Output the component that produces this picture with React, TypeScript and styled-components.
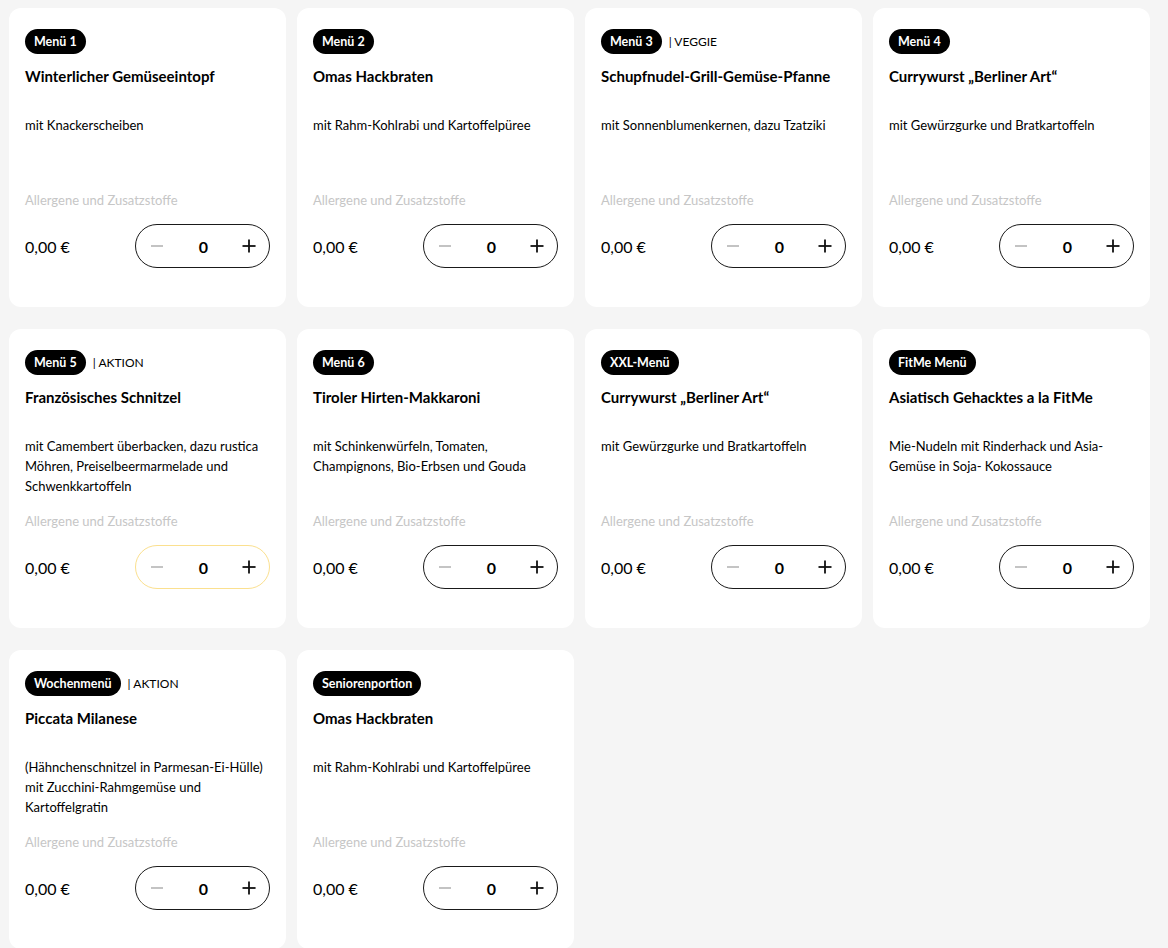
import React from "react";
import styled, { createGlobalStyle } from "styled-components";

const Global = createGlobalStyle`
  html, body { margin: 0; padding: 0; background: #f5f5f5; }
  body { font-family: "Source Sans Pro", Lato, "Liberation Sans", sans-serif; color: #000; }
`;

const Grid = styled.div`
  display: grid;
  grid-template-columns: repeat(4, 277px);
  column-gap: 11px;
  row-gap: 22px;
  padding: 8px 0 0 9px;
`;

const Card = styled.div`
  background: #fff;
  border-radius: 12px;
  height: 299px;
  box-sizing: border-box;
  padding: 21px 16px 0 16px;
  display: flex;
  flex-direction: column;
`;

const Header = styled.div`
  display: flex;
  align-items: center;
  gap: 7px;
  height: 25px;
`;

const Badge = styled.span`
  display: inline-flex;
  align-items: center;
  height: 25px;
  padding: 0 9px;
  border-radius: 13px;
  background: #000;
  color: #fff;
  font-size: 12.5px;
  font-weight: 700;
`;

const Tag = styled.span`
  font-size: 12px;
  color: #000;
`;

const Title = styled.div`
  margin-top: 12px;
  font-size: 15px;
  line-height: 20px;
  font-weight: 700;
`;

const Desc = styled.div`
  margin-top: 29px;
  min-height: 60px;
  font-size: 13px;
  line-height: 20px;
`;

const Allergens = styled.div`
  margin-top: 15px;
  font-size: 13px;
  line-height: 20px;
  color: #c6c6c6;
`;

const Bottom = styled.div`
  margin-top: 14px;
  display: flex;
  align-items: center;
  justify-content: space-between;
  height: 44px;
`;

const Price = styled.span`
  font-size: 16px;
`;

const Stepper = styled.div<{ $active?: boolean }>`
  box-sizing: border-box;
  width: 135px;
  height: 44px;
  border: 1px solid ${(p) => (p.$active ? "#fbe08f" : "#1a1a1a")};
  border-radius: 22px;
  display: grid;
  grid-template-columns: 42px 1fr 40px;
  align-items: center;
`;

const StepBtn = styled.span`
  display: flex;
  align-items: center;
  justify-content: center;
`;

const Qty = styled.span`
  text-align: center;
  font-size: 16px;
  font-weight: 700;
`;

const MinusIcon = () => (
  <svg width="14" height="14" viewBox="0 0 14 14">
    <line x1="1" y1="7" x2="13" y2="7" stroke="#b5b5b5" strokeWidth="1.6" />
  </svg>
);

const PlusIcon = () => (
  <svg width="14" height="14" viewBox="0 0 14 14">
    <line x1="0.5" y1="7" x2="13.5" y2="7" stroke="#111" strokeWidth="1.8" />
    <line x1="7" y1="0.5" x2="7" y2="13.5" stroke="#111" strokeWidth="1.8" />
  </svg>
);

type Item = { badge: string; tag?: string; title: string; desc: string; active?: boolean };

const items: Item[] = [
  { badge: "Menü 1", title: "Winterlicher Gemüseeintopf", desc: "mit Knackerscheiben" },
  { badge: "Menü 2", title: "Omas Hackbraten", desc: "mit Rahm-Kohlrabi und Kartoffelpüree" },
  { badge: "Menü 3", tag: "VEGGIE", title: "Schupfnudel-Grill-Gemüse-Pfanne", desc: "mit Sonnenblumenkernen, dazu Tzatziki" },
  { badge: "Menü 4", title: "Currywurst „Berliner Art“", desc: "mit Gewürzgurke und Bratkartoffeln" },
  { badge: "Menü 5", tag: "AKTION", title: "Französisches Schnitzel", desc: "mit Camembert überbacken, dazu rustica Möhren, Preiselbeermarmelade und Schwenkkartoffeln", active: true },
  { badge: "Menü 6", title: "Tiroler Hirten-Makkaroni", desc: "mit Schinkenwürfeln, Tomaten, Champignons, Bio-Erbsen und Gouda" },
  { badge: "XXL-Menü", title: "Currywurst „Berliner Art“", desc: "mit Gewürzgurke und Bratkartoffeln" },
  { badge: "FitMe Menü", title: "Asiatisch Gehacktes a la FitMe", desc: "Mie-Nudeln mit Rinderhack und Asia-Gemüse in Soja- Kokossauce" },
  { badge: "Wochenmenü", tag: "AKTION", title: "Piccata Milanese", desc: "(Hähnchenschnitzel in Parmesan-Ei-Hülle) mit Zucchini-Rahmgemüse und Kartoffelgratin" },
  { badge: "Seniorenportion", title: "Omas Hackbraten", desc: "mit Rahm-Kohlrabi und Kartoffelpüree" },
];

export default function App() {
  return (
    <>
      <Global />
      <Grid>
        {items.map((it, i) => (
          <Card key={i}>
            <Header>
              <Badge>{it.badge}</Badge>
              {it.tag && <Tag>| {it.tag}</Tag>}
            </Header>
            <Title>{it.title}</Title>
            <Desc>{it.desc}</Desc>
            <Allergens>Allergene und Zusatzstoffe</Allergens>
            <Bottom>
              <Price>0,00 €</Price>
              <Stepper $active={it.active}>
                <StepBtn><MinusIcon /></StepBtn>
                <Qty>0</Qty>
                <StepBtn><PlusIcon /></StepBtn>
              </Stepper>
            </Bottom>
          </Card>
        ))}
      </Grid>
    </>
  );
}
